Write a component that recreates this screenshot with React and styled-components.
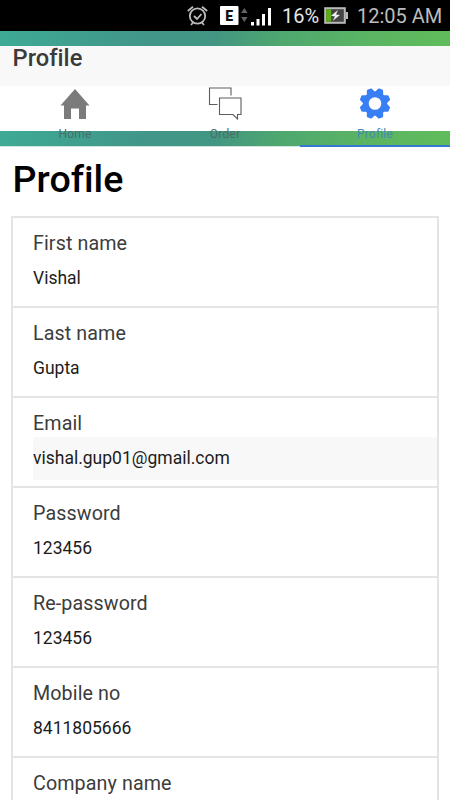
import React from "react";
import styled, { createGlobalStyle } from "styled-components";

const GlobalStyle = createGlobalStyle`
    * {
        box-sizing: border-box;
    }
    body {
        margin: 0;
        background: #fff;
        font-family: Roboto, "Liberation Sans", sans-serif;
        font-variant-ligatures: none;
    }
`

const stripGradient = "linear-gradient(100deg, #3eaa96 0%, #41968a 32%, #429682 48%, #4ea76f 62%, #5ab464 80%, #60bc5a 100%)";

const Screen = styled.div`
    width: 450px;
    height: 800px;
    overflow: hidden;
    background: #fff;
`

const StatusBar = styled.div`
    display: flex;
    height: 31px;
    padding-left: 187px;
    background: #000;
`

const StatusIcons = styled.svg`
    flex: none;
    width: ${(props) => props.$width}px;
    height: 31px;
`

const StatusText = styled.span`
    flex: none;
    width: ${(props) => props.$width}px;
    font-size: 20px;
    line-height: 32px;
    color: ${(props) => props.color};
    white-space: nowrap;
`

const GradientStrip = styled.div`
    height: 15px;
    background: ${stripGradient};
`

const Header = styled.header`
    height: 40px;
    padding-left: 12.6px;
    background: #f8f8f8;
    font-size: 23.7px;
    font-weight: 500;
    line-height: 25px;
    color: #3a3a3a;
`

const TabBar = styled.nav`
    display: flex;
    height: 61px;
    background: ${stripGradient} 0 45px / 100% 15px no-repeat;
`

const Tab = styled.div`
    display: flex;
    flex: 1;
    flex-direction: column;
    align-items: center;
    padding-top: 1px;
    border-bottom: ${(props) => (props.$active ? "2px solid #3478cf" : "1px solid #cfe6df")};
`

const TabLabel = styled.span`
    margin-top: 1px;
    font-size: 12px;
    line-height: 16px;
    letter-spacing: 0.2px;
    color: ${(props) => (props.$active ? "#4389b5" : "#486f66")};
`

const Title = styled.h1`
    margin: 0;
    padding: 11px 0 0 12.6px;
    height: 69px;
    font-size: 37.6px;
    font-weight: 500;
    line-height: 43px;
    color: #000;
`

const Form = styled.div`
    margin: 0 11px;
    border: 2px solid #e4e4e4;
    border-bottom: 0;
`

const Row = styled.div`
    height: 90px;
    padding: 9px 0 0 20px;
    border-bottom: 2px solid #e4e4e4;
`

const Label = styled.div`
    height: 30px;
    font-size: 19.7px;
    line-height: 34px;
    letter-spacing: 0.1px;
    color: #3c3c3c;
`

const Value = styled.div`
    height: 43px;
    font-size: 17.5px;
    line-height: 42px;
    color: #1c1c1c;
    background: ${(props) => (props.$filled ? "#f8f8f8" : "transparent")};
`

const fields = [
  { label: "First name", value: "Vishal" },
  { label: "Last name", value: "Gupta" },
  { label: "Email", value: "vishal.gup01@gmail.com", filled: true },
  { label: "Password", value: "123456" },
  { label: "Re-password", value: "123456" },
  { label: "Mobile no", value: "8411805666" },
  { label: "Company name", value: "" },
];

const HomeIcon = () => (
  <svg width="36" height="38" viewBox="0 0 36 38" fill="#7b7b7b">
    <path d="M18 2 32.5 18.5h-3.5V32h-7V21.5h-8V32H7V18.5H3.5z" />
  </svg>
);

const OrderIcon = () => (
  <svg width="36" height="38" viewBox="0 0 36 38" fill="none" stroke="#5c5c5c" strokeWidth="1.1">
    <path d="M24 8.500V1H2.500V17.500h8" />
    <path d="M12.500 11h21.500V27.500h-3.500v4.500l-4.500-4.500h-13.500z" />
  </svg>
);

const GearIcon = () => (
  <svg width="36" height="38" viewBox="0 0 36 38">
    <circle cx="18" cy="16.5" r="9.2" fill="none" stroke="#387ef5" strokeWidth="5.8" />
    {[0, 1, 2, 3, 4, 5, 6, 7].map((n) => (
      <path
        key={n}
        d="M13.500 6 15.300 1.700q.3-.7 1-.7h3.400q.7 0 1 .7L22.500 6z"
        fill="#387ef5"
        transform={`rotate(${22.5 + n * 45} 18 16.5)`}
      />
    ))}
  </svg>
);

const App = () => {
  return (
    <>
      <GlobalStyle />
      <Screen>
        <StatusBar>
          {/* alarm, notification and signal */}
          <StatusIcons $width={95} viewBox="0 0 95 31">
            <g fill="none" stroke="#bdbdbd" strokeWidth="1.8">
              <circle cx="10.5" cy="16" r="7.7" />
              <path d="M0.8 11 6 6.700M20.200 11 15 6.700M4 25l2.500-3M17 25l-2.500-3M7 16l3 3 4.500-5" />
            </g>
            <rect x="33" y="6" width="18.5" height="19" rx="1" fill="#fff" />
            <text x="42.2" y="20.5" textAnchor="middle" fontSize="14" fontWeight="900" fill="#111">E</text>
            <path d="M54 13l3.300-5 3.300 5zM54 17h6.600l-3.300 5z" fill="#626262" />
            <path d="M65.500 22v3.500M71 19v6.500M76.500 14v11.500M82.500 8v17.500" stroke="#fff" strokeWidth="3" />
          </StatusIcons>
          <StatusText $width={42} color="#e8e8e8">16%</StatusText>
          <StatusIcons $width={33} viewBox="0 0 33 31">
            <rect x="1.2" y="8.2" width="19.6" height="14.6" fill="#444" stroke="#b9b9b9" strokeWidth="2" />
            <path d="M2.200 9.200h5v12.600h-5z" fill="#5cae18" />
            <path d="M21.500 12H24v7h-2.500z" fill="#b9b9b9" />
            <path d="M14 10 7 15.800l4 .7-2.500 4.500 7.500-6-4-.5z" fill="#eee" />
          </StatusIcons>
          <StatusText $width={90} color="#bcbcbc">12:05 AM</StatusText>
        </StatusBar>
        <GradientStrip />
        <Header>Profile</Header>
        {/* tabs */}
        <TabBar>
          <Tab>
            <HomeIcon />
            <TabLabel>Home</TabLabel>
          </Tab>
          <Tab>
            <OrderIcon />
            <TabLabel>Order</TabLabel>
          </Tab>
          <Tab $active>
            <GearIcon />
            <TabLabel $active>Profile</TabLabel>
          </Tab>
        </TabBar>
        <Title>Profile</Title>
        {/* profile form */}
        <Form>
          {fields.map((field) => (
            <Row key={field.label}>
              <Label>{field.label}</Label>
              <Value $filled={field.filled}>{field.value}</Value>
            </Row>
          ))}
        </Form>
      </Screen>
    </>
  );
};

export default App;
